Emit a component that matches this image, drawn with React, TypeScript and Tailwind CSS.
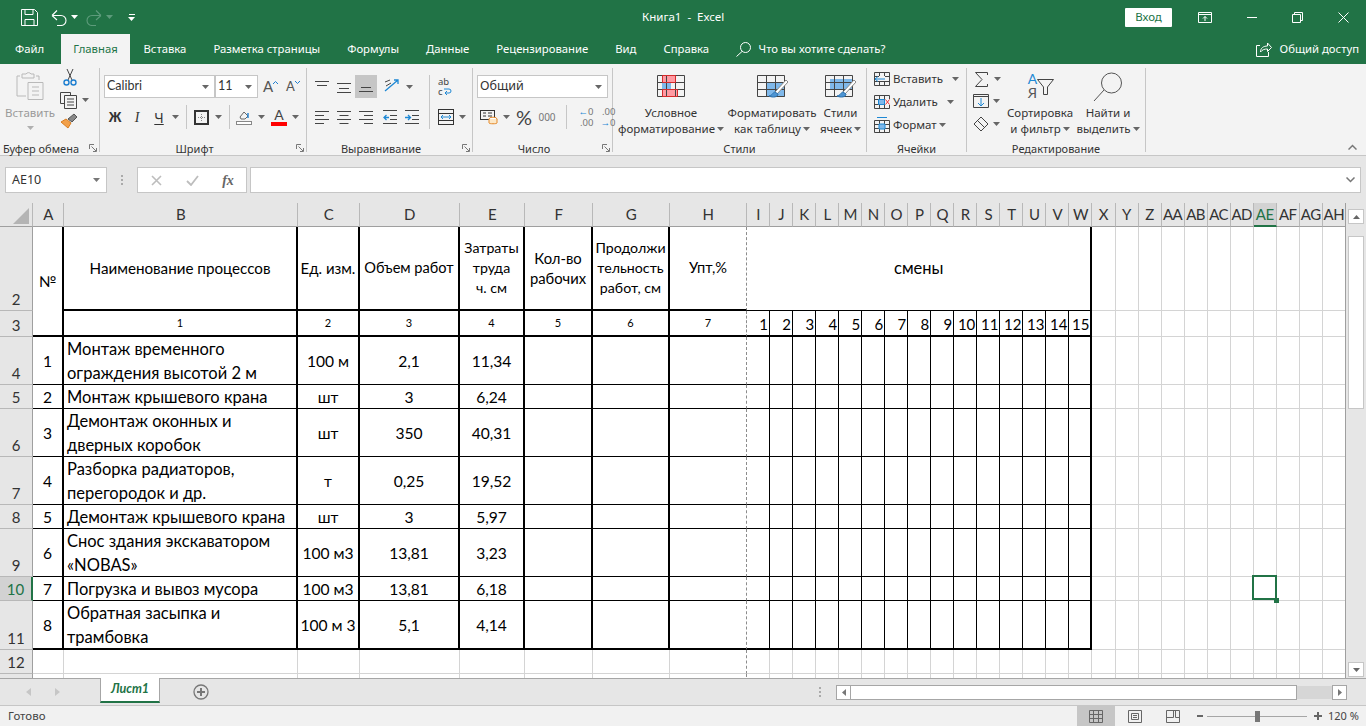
import React from 'react';

const Caret = ({ color = '#666' }: { color?: string }) => (
  <svg width="7" height="4" viewBox="0 0 7 4" className="shrink-0"><path d="M0 0h7L3.5 4z" fill={color} /></svg>
);

const Box = ({ w, active, children }: { w: number; active?: boolean; children?: React.ReactNode }) => (
  <div className={`flex items-center justify-center h-full shrink-0 ${active ? 'bg-[#c6c6c6]' : ''}`} style={{ width: w }}>
    {children}
  </div>
);

const Sep = ({ w }: { w: number }) => (
  <div className="flex justify-center h-full shrink-0" style={{ width: w }}><div className="w-px h-full bg-[#c6c6c6]" /></div>
);

const AlignLeft = () => (
  <svg width="15" height="14" stroke="#444"><path d="M0 1.5h14M0 5.5h9M0 9.5h14M0 13.5h9" /></svg>
);
const AlignCenter = () => (
  <svg width="15" height="14" stroke="#444"><path d="M0 1.5h14M2.5 5.5h9M0 9.5h14M2.5 13.5h9" /></svg>
);
const AlignRight = () => (
  <svg width="15" height="14" stroke="#444"><path d="M0 1.5h14M5 5.5h9M0 9.5h14M5 13.5h9" /></svg>
);
const Indent = ({ right }: { right?: boolean }) => (
  <svg width="15" height="14" fill="none">
    <path d="M0 .5h14M0 13.5h14M7 5.5h7M7 9.5h7" stroke="#444" />
    <path d={right ? 'M0 7.5h5M3 5l2.5 2.5L3 10' : 'M6 7.5H1M3.5 5L1 7.5 3.5 10'} stroke="#1e88d4" strokeWidth="1.3" />
  </svg>
);

const Launcher = () => (
  <svg width="8" height="8" viewBox="0 0 8 8" fill="none" stroke="#777"><path d="M.5 5V.5H5M2.5 2.5L7 7M4 7.5h3.5V4" /></svg>
);

const SelectBox = ({ w, label, font }: { w: number; label: string; font?: boolean }) => (
  <div className={`h-[23px] bg-white border border-[#c6c6c6] flex items-center justify-between pl-[2px] pr-[5px] text-[12.5px] text-[#333] shrink-0 ${font ? 'font-[Lato,Roboto,sans-serif]' : ''}`} style={{ width: w }}>
    <span>{label}</span><Caret />
  </div>
);

const Group = ({ w, label, launcher, children }: { w: number; label: string; launcher?: boolean; children: React.ReactNode }) => (
  <div className="h-[84px] mt-[4px] border-r border-r-[#c6c6c6] flex flex-col shrink-0" style={{ width: w }}>
    <div className="flex-1 min-h-0">{children}</div>
    <div className="h-[8px] flex items-center text-[11px] text-[#333] leading-none">
      <span className="flex-1 text-center whitespace-nowrap">{label}</span>
      {launcher && <span className="w-[17px] flex justify-center pl-[4px]"><Launcher /></span>}
    </div>
  </div>
);

const TitleBar = () => (
  <div className="h-[34px] bg-[#217346] flex items-center text-white text-[11.5px] shrink-0">
    <div className="w-[21px]" />
    <svg width="17" height="17" viewBox="0 0 17 17" fill="none" stroke="#fff"><path d="M.5.5h13l3 3v13H.5zM4 .5v5h8v-5M4 16.5v-6h9v6" /></svg>
    <div className="w-[13px]" />
    <svg width="16" height="17" viewBox="0 0 16 17" fill="none" stroke="#fff" strokeWidth="1.1"><path d="M1 6.5L6 1.5M1 6.5L6 11M1 6.5h9a5 5 0 0 1 0 10H6" /></svg>
    <div className="w-[4px]" /><Caret color="#fff" />
    <div className="w-[8px]" />
    <svg width="16" height="17" viewBox="0 0 16 17" fill="none" stroke="#5d9b7b" strokeWidth="1.1"><path d="M15 6.5L10 1.5M15 6.5L10 11M15 6.5H6a5 5 0 0 0 0 10h4" /></svg>
    <div className="w-[4px]" /><Caret color="#5d9b7b" />
    <div className="w-[15px]" />
    <div className="flex flex-col items-center gap-[2px]"><div className="w-[6px] h-px bg-white" /><Caret color="#fff" /></div>
    <div className="w-[507px]" />
    <span className="w-[82px] text-center whitespace-pre">Книга1  -  Excel</span>
    <div className="flex-1" />
    <div className="w-[47px] h-[19px] bg-white rounded-[1px] text-[#217346] flex items-center justify-center mr-[26px]">Вход</div>
    <svg width="14" height="11" viewBox="0 0 14 11" fill="none" stroke="#fff" className="mr-[35px]"><path d="M.5.5h13v10H.5zM.5 2.5h13M7 9V4.5M5 6.5l2-2 2 2" /></svg>
    <div className="w-[10px] h-px bg-white mr-[35px]" />
    <svg width="11" height="11" viewBox="0 0 11 11" fill="none" stroke="#fff" className="mr-[35px]"><path d="M.5 2.5h8v8h-8zM2.5 2.5v-2h8v8h-2" /></svg>
    <svg width="11" height="11" viewBox="0 0 11 11" fill="none" stroke="#fff" className="mr-[17px]"><path d="M.5.5l10 10M10.5.5l-10 10" /></svg>
  </div>
);

const TABS = ['Вставка', 'Разметка страницы', 'Формулы', 'Данные', 'Рецензирование', 'Вид', 'Справка'];

const TabBar = () => (
  <div className="h-[30px] bg-[#217346] flex text-white text-[11.3px] shrink-0">
    <div className="w-[61px] flex items-center pl-[15px]">Файл</div>
    <div className="w-[69px] bg-[#f3f3f3] text-[#217346] flex items-center justify-center">Главная</div>
    {TABS.map((t) => (
      <div key={t} className="px-[13.5px] flex items-center whitespace-nowrap">{t}</div>
    ))}
    <div className="flex items-center ml-[13px] gap-[8px]">
      <svg width="15" height="15" viewBox="0 0 15 15" fill="none" stroke="#fff"><circle cx="9.5" cy="5.5" r="5" /><path d="M6 9.5L.5 14.5" /></svg>
      <span className="whitespace-nowrap">Что вы хотите сделать?</span>
    </div>
    <div className="flex-1" />
    <div className="flex items-center gap-[8px] pr-[7px]">
      <svg width="16" height="15" viewBox="0 0 16 15" fill="none" stroke="#fff"><path d="M4 3.5H.5v11h12V10" /><path d="M4.5 10c0-4 3-6 7-6V1l4 4.5-4 4V7c-3 0-5 .5-7 3z" /></svg>
      <span className="whitespace-nowrap">Общий доступ</span>
    </div>
  </div>
);

const Clipboard = () => (
  <div className="flex h-full">
    <div className="w-[60px] flex flex-col items-center pt-[3px]">
      <svg width="28" height="29" viewBox="0 0 28 29" fill="none" stroke="#b9b9b9"><path d="M4 5H1v20h9M20 5h3v4M6 3h4a3 3 0 0 1 5 0h3v4H6z" /><path d="M12 11.5h15v17H12z" fill="#f3f3f3" /><path d="M16 16h7M16 20h7M16 24h7" /></svg>
      <span className="text-[11.5px] text-[#9a9a9a] mt-[5px] leading-[16px]">Вставить</span>
      <div className="mt-[5px]"><Caret color="#b0b0b0" /></div>
    </div>
    <div className="flex flex-col pt-[1px]">
      <div className="h-[19px] pl-[2px]">
        <svg width="16" height="17" viewBox="0 0 16 17" fill="none"><path d="M5 0l5 11M11 0L6 11" stroke="#444" /><circle cx="4.5" cy="13.5" r="2.5" stroke="#1e7fd0" strokeWidth="1.4" /><circle cx="11.5" cy="13.5" r="2.5" stroke="#1e7fd0" strokeWidth="1.4" /></svg>
      </div>
      <div className="h-[22px] flex items-center pt-[2px]">
        <svg width="17" height="17" viewBox="0 0 17 17" fill="none" stroke="#444"><path d="M.5.5h10v3M.5.5v11h4" /><path d="M4.5 3.5h12v13h-12z" fill="#f3f3f3" /><path d="M7 7h7M7 10h7M7 13h7" /></svg>
        <div className="ml-[5px]"><Caret /></div>
      </div>
      <div className="pt-[3px]">
        <svg width="18" height="16" viewBox="0 0 18 16" fill="none"><path d="M1 9l7 6 3-5-5-4z" fill="#f2a04a" stroke="#d97c1f" /><path d="M8 6l6-5 3 3-5 5z" fill="#888" stroke="#555" /></svg>
      </div>
    </div>
  </div>
);

const Font = () => (
  <div className="pl-[4px] pt-[7px]">
    <div className="flex items-center h-[23px]">
      <SelectBox w={111} label="Calibri" font />
      <SelectBox w={43} label="11" font />
      <Box w={25}>
        <span className="text-[15px] text-[#555] leading-none font-[Lato,Roboto,sans-serif]">A</span>
        <svg width="5" height="3" stroke="#1e7fd0" fill="none" className="mb-[8px]"><path d="M0 3l2.5-2.5L5 3" /></svg>
      </Box>
      <Box w={20}>
        <span className="text-[13px] text-[#555] leading-none font-[Lato,Roboto,sans-serif]">A</span>
        <svg width="5" height="3" stroke="#1e7fd0" fill="none" className="mb-[8px]"><path d="M0 0l2.5 2.5L5 0" /></svg>
      </Box>
    </div>
    <div className="flex items-center h-[24px] mt-[7px] text-[#333]">
      <Box w={22}><span className="font-bold text-[14px] font-['Liberation_Sans']">Ж</span></Box>
      <Box w={22}><span className="italic text-[14px] font-['Liberation_Serif']">I</span></Box>
      <Box w={22}><span className="underline text-[14px]">Ч</span></Box>
      <Box w={10}><Caret /></Box>
      <Sep w={12} />
      <Box w={18}>
        <svg width="15" height="15" fill="none"><rect x="1" y="1" width="13" height="13" stroke="#333" strokeWidth="2" /><path d="M7.5 4v7M4 7.5h7" stroke="#888" strokeDasharray="1 1" /></svg>
      </Box>
      <Box w={16}><Caret /></Box>
      <Sep w={6} />
      <Box w={24}>
        <svg width="16" height="16" fill="none"><path d="M4 8l4-5 4 4-3 3H5z" stroke="#666" /><path d="M12 9V4" stroke="#1e7fd0" strokeWidth="1.4" /><rect x=".5" y="12.5" width="15" height="3" fill="#fff" stroke="#888" /></svg>
      </Box>
      <Box w={10}><Caret /></Box>
      <Box w={26}>
        <div className="flex flex-col items-center">
          <span className="text-[14px] leading-[14px] text-[#444] font-[Lato,Roboto,sans-serif]">A</span>
          <div className="w-[16px] h-[4px] bg-[#ff0000]" />
        </div>
      </Box>
      <Box w={6}><Caret /></Box>
    </div>
  </div>
);

const Alignment = () => (
  <div className="pl-[4px] pt-[7px] flex h-full">
    <div className="w-[117px] shrink-0">
      <div className="flex h-[23px]">
        <Box w={22}><svg width="15" height="14" stroke="#444"><path d="M0 1.5h14M2 5.5h10" /></svg></Box>
        <Box w={22}><svg width="15" height="14" stroke="#444"><path d="M0 3.5h14M2 8.5h10M0 12.5h14" /></svg></Box>
        <Box w={22} active><svg width="15" height="14" stroke="#444"><path d="M2 7.5h10M0 11.5h14" /></svg></Box>
        <Box w={2} />
        <Box w={24}>
          <svg width="17" height="17" fill="none"><path d="M2 13L15 2M11 2h4v4" stroke="#1e88d4" strokeWidth="1.3" /><path d="M2 4l5-2M3 8l5-3" stroke="#444" /></svg>
        </Box>
        <Box w={12}><Caret /></Box>
      </div>
      <div className="flex h-[24px] mt-[7px]">
        <Box w={22}><AlignLeft /></Box>
        <Box w={22}><AlignCenter /></Box>
        <Box w={22}><AlignRight /></Box>
        <Box w={2} />
        <Box w={22}><Indent /></Box>
        <Box w={22}><Indent right /></Box>
      </div>
    </div>
    <div className="w-[3px] h-[54px] shrink-0 flex justify-center"><div className="w-px h-full bg-[#c6c6c6]" /></div>
    <div className="pl-[7px]">
      <div className="h-[23px] flex items-center">
        <div className="flex flex-col leading-[10px] text-[9.5px] text-[#444]">
          <span>ab</span>
          <span className="flex items-center">c<svg width="9" height="7" fill="none" stroke="#1e88d4"><path d="M1 1h5a2 2 0 0 1 0 4H2M4 3L2 5l2 2" /></svg></span>
        </div>
      </div>
      <div className="h-[24px] mt-[7px] flex items-center gap-[5px]">
        <svg width="16" height="16" fill="none"><rect x=".5" y=".5" width="15" height="15" stroke="#333" /><path d="M.5 4.5h15M.5 11.5h15" stroke="#333" /><path d="M3 8h10M5 6L3 8l2 2M11 6l2 2-2 2" stroke="#1e88d4" /></svg>
        <Caret />
      </div>
    </div>
  </div>
);

const NumberGroup = () => (
  <div className="pl-[4px] pt-[7px]">
    <SelectBox w={131} label="Общий" />
    <div className="flex items-center h-[24px] mt-[7px]">
      <Box w={24}>
        <svg width="18" height="15" fill="none"><rect x=".5" y=".5" width="14" height="9" stroke="#333" /><path d="M3 3h3M3 6h3M8 3h4M8 6h4" stroke="#333" /><ellipse cx="13" cy="9" rx="4" ry="1.8" fill="#fff" stroke="#e58a2b" /><path d="M9 9v4c0 1 8 1 8 0V9" fill="#fce8c8" stroke="#e58a2b" /></svg>
      </Box>
      <Box w={10}><Caret /></Box>
      <Box w={26}><span className="text-[20px] leading-none text-[#444] font-[Lato,Roboto,sans-serif]">%</span></Box>
      <Box w={20}><span className="text-[10px] text-[#777]">000</span></Box>
      <Sep w={18} />
      <Box w={22}>
        <div className="flex flex-col items-end text-[9.5px] leading-[11px] text-[#777]"><span><span className="text-[#1e88d4]">←</span>0</span><span>.00</span></div>
      </Box>
      <Box w={22}>
        <div className="flex flex-col items-end text-[9.5px] leading-[11px] text-[#777]"><span>.00</span><span><span className="text-[#1e88d4]">→</span>0</span></div>
      </Box>
    </div>
  </div>
);

const BigButton = ({ w, icon, top, bottom }: { w: number; icon: React.ReactNode; top: string; bottom: string }) => (
  <div className="flex flex-col items-center pt-[7px] shrink-0" style={{ width: w }}>
    <div className="h-[30px]">{icon}</div>
    <div className="text-[11.5px] leading-[16px] text-[#333] text-center whitespace-nowrap">
      <div>{top}</div>
      <div className="flex items-center justify-center gap-[2px]">{bottom}<Caret /></div>
    </div>
  </div>
);

const GridIcon = ({ children }: { children?: React.ReactNode }) => (
  <svg width="31" height="24" viewBox="0 0 31 24" fill="none">
    {children}
    <path d="M.5.5h27v21H.5zM.5 7.5h27M.5 14.5h27M9.5.5v21M18.5.5v21" stroke="#444" />
    <path d="M29 5L18 17l2 2L31 7z" fill="#fff" stroke="#888" />
    <path d="M18 17c-2 0-2 3-6 4 4 2 9 1 9-2z" fill="#4d94d2" stroke="#2d74b2" />
  </svg>
);

const Styles = () => (
  <div className="flex h-full">
    <BigButton w={116} top="Условное" bottom="форматирование" icon={
      <svg width="28" height="22" viewBox="0 0 28 22" fill="none">
        <path d="M5 .5h13v7H5z" fill="#ff9aa2" /><path d="M5 7.5h9v7H5z" fill="#7fb8ea" /><path d="M5 14.5h15v7H5z" fill="#ff9aa2" />
        <path d="M.5.5h27v21H.5zM.5 7.5h27M.5 14.5h27M9.5.5v21M18.5.5v21" stroke="#444" />
        <path d="M5.5.5h13v7h-13zM5.5 14.5h15v7h-15z" stroke="#d62b2b" />
      </svg>
    } />
    <BigButton w={86} top="Форматировать" bottom="как таблицу" icon={<GridIcon><path d="M9 7h19v15H9z" fill="#7fb8ea" /></GridIcon>} />
    <BigButton w={51} top="Стили" bottom="ячеек" icon={<GridIcon><path d="M5 4h22v11H5z" fill="#7fb8ea" /></GridIcon>} />
  </div>
);

const CellRow = ({ icon, label, gap }: { icon: React.ReactNode; label: string; gap: number }) => (
  <div className="h-[23px] flex items-center text-[11.5px] text-[#333]">
    <div className="w-[19px] flex items-center">{icon}</div>
    <span className="whitespace-nowrap">{label}</span>
    <div style={{ width: gap }} />
    <Caret />
  </div>
);

const Cells = () => (
  <div className="pl-[7px] -mt-px">
    <CellRow label="Вставить" gap={9} icon={<svg width="16" height="14" fill="none" stroke="#444"><path d="M.5.5h15v13H.5zM.5 4.5h15M.5 9.5h15M5.5.5v13M10.5.5v13" /><path d="M5 4h6v5H5z" fill="#f3f3f3" stroke="none" /><path d="M1 7h10M4 4.5L1 7l3 2.5" stroke="#1e88d4" /></svg>} />
    <CellRow label="Удалить" gap={9} icon={<svg width="16" height="14" fill="none" stroke="#444"><path d="M.5.5h15v13H.5zM.5 4.5h15M.5 9.5h15M5.5.5v13M10.5.5v13" /><path d="M4.5 4.5h6v5h-6z" fill="#7fb8ea" stroke="#1e88d4" /><path d="M11 4h5v6h-5z" fill="#f3f3f3" stroke="none" /><path d="M11.5 4.5l4 5M15.5 4.5l-4 5" stroke="#e33" /></svg>} />
    <CellRow label="Формат" gap={2} icon={<svg width="16" height="16" fill="none" stroke="#444"><path d="M.5 3.5h15v12H.5zM.5 7.5h15M.5 11.5h15M5.5 3.5v12M10.5 3.5v12" /><path d="M5 7h6v5H5z" fill="#7fb8ea" stroke="#1e88d4" /><path d="M3 .5h10" stroke="#1e88d4" /></svg>} />
  </div>
);

const Editing = () => (
  <div className="flex h-full">
    <div className="w-[40px] pl-[6px] shrink-0">
      <div className="h-[22px] flex items-center gap-[6px] pl-[2px]">
        <svg width="13" height="15" fill="none" stroke="#444"><path d="M12.5 3V.5h-12L7 7.5.5 14.5h12V12" /></svg>
        <Caret />
      </div>
      <div className="h-[22px] flex items-center gap-[4px]">
        <svg width="16" height="14" fill="none"><path d="M.5.5h15v13H.5zM.5 2.5h15" stroke="#444" /><path d="M8 4v8M5 9l3 3 3-3" stroke="#1e88d4" /></svg>
        <Caret />
      </div>
      <div className="h-[24px] flex items-center gap-[4px]">
        <svg width="16" height="16" fill="none" stroke="#444"><path d="M1 8l7-7 7 7-7 7zM4.5 4.5l7 7" /></svg>
        <Caret />
      </div>
    </div>
    <div className="w-[66px] flex flex-col items-center pt-[4px] shrink-0">
      <div className="h-[33px] flex items-start pl-[2px]">
        <div className="flex flex-col items-center text-[14px] leading-[14px] font-[Lato,Roboto,sans-serif]"><span className="text-[#1e88d4]">А</span><span className="text-[#555]">Я</span></div>
        <svg width="17" height="17" fill="none" stroke="#444" className="mt-[7px]"><path d="M.5.5h16L10.5 8v7.5h-4V8z" /></svg>
      </div>
      <div className="text-[11.5px] leading-[16px] text-[#333] text-center whitespace-nowrap">
        <div>Сортировка</div>
        <div className="flex items-center justify-center gap-[2px]">и фильтр<Caret /></div>
      </div>
    </div>
    <div className="w-[70px] flex flex-col items-center pt-[4px] shrink-0">
      <div className="h-[33px]">
        <svg width="30" height="30" fill="none" stroke="#555"><circle cx="18.5" cy="11" r="10" /><path d="M11 18L1 29" /></svg>
      </div>
      <div className="text-[11.5px] leading-[16px] text-[#333] text-center whitespace-nowrap">
        <div>Найти и</div>
        <div className="flex items-center justify-center gap-[2px]">выделить<Caret /></div>
      </div>
    </div>
  </div>
);

const Ribbon = () => (
  <div className="h-[92px] bg-[#f3f3f3] border-b border-b-[#c6c6c6] flex shrink-0">
    <Group w={100} label="Буфер обмена" launcher><Clipboard /></Group>
    <Group w={207} label="Шрифт" launcher><Font /></Group>
    <Group w={166} label="Выравнивание" launcher><Alignment /></Group>
    <Group w={140} label="Число" launcher><NumberGroup /></Group>
    <Group w={254} label="Стили"><Styles /></Group>
    <Group w={100} label="Ячейки"><Cells /></Group>
    <Group w={179} label="Редактирование"><Editing /></Group>
    <div className="flex-1 flex items-end justify-end pr-[9px] pb-[5px]">
      <svg width="9" height="6" fill="none" stroke="#777" strokeWidth="1.5"><path d="M.5 5.5L4.5 1.5l4 4" /></svg>
    </div>
  </div>
);

const FormulaBar = () => (
  <div className="h-[47px] bg-[#e6e6e6] flex items-start pt-[11px] pl-[5px] pr-[5px] shrink-0">
    <div className="w-[102px] h-[26px] bg-white border border-[#c6c6c6] flex items-center justify-between pl-[6px] pr-[6px] text-[12.5px] text-[#333]">
      <span>AE10</span><Caret color="#777" />
    </div>
    <div className="w-[30px] h-[26px] flex flex-col items-center justify-center gap-[2px]">
      <div className="w-[2px] h-[2px] bg-[#aaa]" /><div className="w-[2px] h-[2px] bg-[#aaa]" /><div className="w-[2px] h-[2px] bg-[#aaa]" />
    </div>
    <div className="w-[110px] h-[26px] bg-white border border-[#c6c6c6] flex items-center">
      <div className="w-[36px] flex justify-center"><svg width="11" height="11" fill="none" stroke="#bdbdbd" strokeWidth="1.6"><path d="M1 1l9 9M10 1l-9 9" /></svg></div>
      <div className="w-[36px] flex justify-center"><svg width="13" height="11" fill="none" stroke="#bdbdbd" strokeWidth="1.8"><path d="M1 6l4 4 7-9" /></svg></div>
      <div className="w-[36px] flex justify-center italic font-['Liberation_Serif'] text-[14px] font-bold text-[#666]">fx</div>
    </div>
    <div className="w-[3px]" />
    <div className="flex-1 h-[26px] bg-white border border-[#c6c6c6] flex items-center justify-end pr-[5px]">
      <svg width="9" height="6" fill="none" stroke="#777" strokeWidth="1.5"><path d="M.5.5l4 4 4-4" /></svg>
    </div>
  </div>
);

const COLS = ['A', 'B', 'C', 'D', 'E', 'F', 'G', 'H', 'I', 'J', 'K', 'L', 'M', 'N', 'O', 'P', 'Q', 'R', 'S', 'T', 'U', 'V', 'W', 'X', 'Y', 'Z', 'AA', 'AB', 'AC', 'AD', 'AE', 'AF', 'AG', 'AH'];

const HEAD: React.ReactNode[] = [
  'Наименование процессов', 'Ед. изм.', 'Объем работ',
  <>Затраты<br />труда<br />ч. см</>, <>Кол-во<br />рабочих</>, <>Продолжи<br />тельность<br />работ, см</>, 'Упт,%',
];

const HEAD_SIZE = ['text-[15.2px]', 'text-[15px]', 'text-[14.6px]', 'text-[14.2px]', 'text-[14.8px]', 'text-[14.2px]', 'text-[14.6px]'];

const DATA: Record<number, React.ReactNode[]> = {
  4: ['1', <>Монтаж временного<br />ограждения высотой 2 м</>, '100 м', '2,1', '11,34'],
  5: ['2', 'Монтаж крышевого крана', 'шт', '3', '6,24'],
  6: ['3', <>Демонтаж оконных и<br />дверных коробок</>, 'шт', '350', '40,31'],
  7: ['4', <>Разборка радиаторов,<br />перегородок и др.</>, 'т', '0,25', '19,52'],
  8: ['5', 'Демонтаж крышевого крана', 'шт', '3', '5,97'],
  9: ['6', <>Снос здания экскаватором<br />«NOBAS»</>, '100 м3', '13,81', '3,23'],
  10: ['7', 'Погрузка и вывоз мусора', '100 м3', '13,81', '6,18'],
  11: ['8', <>Обратная засыпка и<br />трамбовка</>, '100 м 3', '5,1', '4,14'],
};

const rightBorder = (r: number, c: number) => {
  if (c === 7) return 'border-r border-r-[#8c8c8c] [border-right-style:dashed]';
  if (r <= 11 && c <= 6) return 'border-r-2 border-r-black';
  if (r <= 11 && c === 22) return 'border-r-2 border-r-black';
  if (r <= 11 && c >= 8 && c < 22) return 'border-r border-r-black';
  return 'border-r border-r-[#d4d4d4]';
};

const bottomBorder = (r: number, c: number) => {
  if (c <= 22 && (r === 3 || r === 11)) return 'border-b-2 border-b-black';
  if (c <= 22 && r >= 4 && r <= 10) return 'border-b border-b-black';
  return 'border-b border-b-[#d4d4d4]';
};

const CELL_BASE = 'flex items-center justify-center text-center min-w-0 overflow-hidden whitespace-nowrap';

const RowHeader = ({ n }: { n: number }) => (
  <div className={`flex items-end justify-center text-[15px] leading-[22px] border-b border-b-[#b8b8b8] ${n === 10 ? 'bg-[#d2d2d2] text-[#217346] border-r-2 border-r-[#217346]' : 'bg-[#e6e6e6] text-[#333] border-r border-r-[#9f9f9f]'}`}>{n < 13 ? n : ''}</div>
);

const Sheet = () => {
  const cells: React.ReactNode[] = [];
  for (let r = 2; r <= 13; r++) {
    cells.push(<RowHeader key={`h${r}`} n={r} />);
    for (let c = 0; c < COLS.length; c++) {
      const key = `${r}-${c}`;
      const edge = `${rightBorder(r, c)} ${bottomBorder(r, c)}`;
      if (r === 2 && c === 0) {
        cells.push(<div key={key} className={`${CELL_BASE} row-span-2 text-[15px] ${rightBorder(3, 0)} ${bottomBorder(3, 0)}`}>№</div>);
      } else if (r === 3 && c === 0) {
        continue;
      } else if (r === 2 && c >= 1 && c <= 7) {
        const side = c === 7 ? rightBorder(2, 7) : 'border-r-2 border-r-black';
        cells.push(<div key={key} className={`${CELL_BASE} ${HEAD_SIZE[c - 1]} leading-[20px] border-b-2 border-b-black ${side}`}>{HEAD[c - 1]}</div>);
      } else if (r === 2 && c === 8) {
        cells.push(<div key={key} className={`${CELL_BASE} col-span-15 text-[16.5px] border-r-2 border-r-black border-b border-b-black`}>смены</div>);
      } else if (r === 2 && c > 8 && c <= 22) {
        continue;
      } else if (r === 3 && c >= 1 && c <= 7) {
        cells.push(<div key={key} className={`${CELL_BASE} text-[11px] ${edge}`}>{c}</div>);
      } else if (r === 3 && c >= 8 && c <= 22) {
        cells.push(<div key={key} className={`flex items-end justify-end pr-[1px] pb-[1px] text-[15px] leading-[20px] ${edge}`}>{c - 7}</div>);
      } else if (DATA[r] && c === 1) {
        cells.push(<div key={key} className={`flex items-center text-left pl-[3px] min-w-0 overflow-hidden whitespace-nowrap text-[16.5px] leading-[24px] ${edge}`}>{DATA[r][c]}</div>);
      } else if (DATA[r] && c <= 4) {
        cells.push(<div key={key} className={`${CELL_BASE} text-[15.6px] leading-[24px] ${edge}`}>{DATA[r][c]}</div>);
      } else if (r === 10 && c === 30) {
        cells.push(
          <div key={key} className={`relative ${edge}`}>
            <div className="absolute -left-[2px] -top-[2px] w-[25px] h-[25px] border-2 border-[#217346] z-10" />
            <div className="absolute -right-[3px] -bottom-[3px] w-[5px] h-[5px] bg-[#217346] z-20" />
          </div>
        );
      } else {
        cells.push(<div key={key} className={edge} />);
      }
    }
  }
  return (
    <div className="h-[475px] flex shrink-0 bg-white overflow-hidden">
      <div className="w-[1345px] shrink-0 overflow-hidden font-[Lato,Roboto,sans-serif] text-black">
        <div className="grid grid-cols-[33px_31px_234px_62px_100px_65px_68px_77px_77px_repeat(26,23.04px)] grid-rows-[24px_84px_26px_48px_24px_48px_48px_24px_48px_24px_49px_24px_24px]">
          <div className="bg-[#e6e6e6] border-r border-r-[#b8b8b8] border-b border-b-[#9f9f9f] flex items-end justify-end p-[2px] pr-[3px]">
            <svg width="16" height="16"><path d="M16 0v16H0z" fill="#b4b4b4" /></svg>
          </div>
          {COLS.map((name) => (
            <div key={name} className={`flex items-center justify-center text-[15px] tracking-[-0.5px] overflow-hidden whitespace-nowrap border-r border-r-[#b8b8b8] ${name === 'AE' ? 'bg-[#d2d2d2] text-[#217346] border-b-2 border-b-[#217346]' : 'bg-[#e6e6e6] text-[#333] border-b border-b-[#9f9f9f]'}`}>{name}</div>
          ))}
          {cells}
        </div>
      </div>
      <div className="flex-1 bg-[#e6e6e6] border-l border-l-[#9f9f9f] flex flex-col items-center pt-[6px] pb-[1px]">
        <div className="w-[16px] h-[15px] bg-white border border-[#c6c6c6] flex items-center justify-center">
          <svg width="7" height="4"><path d="M0 4h7L3.5 0z" fill="#666" /></svg>
        </div>
        <div className="w-full flex-1 px-[2px] pt-[12px]">
          <div className="w-[16px] h-[173px] bg-white border border-[#c6c6c6]" />
        </div>
        <div className="w-[16px] h-[15px] bg-white border border-[#c6c6c6] flex items-center justify-center">
          <Caret />
        </div>
      </div>
    </div>
  );
};

const SheetTabs = () => (
  <div className="h-[28px] bg-[#e6e6e6] border-t border-t-[#a6a6a6] border-b border-b-[#c6c6c6] flex shrink-0">
    <div className="w-[100px] flex items-center pl-[26px] gap-[24px] shrink-0">
      <svg width="5" height="8"><path d="M5 0v8L0 4z" fill="#c6c6c6" /></svg>
      <svg width="5" height="8"><path d="M0 0v8l5-4z" fill="#c6c6c6" /></svg>
    </div>
    <div className="w-[60px] h-[25px] bg-white border-x border-x-[#a6a6a6] border-b-2 border-b-[#217346] flex items-center justify-center italic font-bold text-[12.5px] text-[#217346] shrink-0 font-[Lato,Roboto,sans-serif] -mt-px">Лист1</div>
    <div className="w-[82px] flex items-center justify-center shrink-0">
      <svg width="16" height="16" fill="none" stroke="#777"><circle cx="8" cy="8" r="7" strokeWidth="1.3" /><path d="M4 8h8M8 4v8" strokeWidth="2" /></svg>
    </div>
    <div className="w-[575px] shrink-0" />
    <div className="w-[6px] flex flex-col items-center justify-center gap-[2px] shrink-0">
      <div className="w-[2px] h-[2px] bg-[#aaa]" /><div className="w-[2px] h-[2px] bg-[#aaa]" /><div className="w-[2px] h-[2px] bg-[#aaa]" />
    </div>
    <div className="w-[13px] shrink-0" />
    <div className="flex items-center">
      <div className="w-[15px] h-[15px] bg-white border border-[#a6a6a6] flex items-center justify-center"><svg width="4" height="7"><path d="M4 0v7L0 3.5z" fill="#777" /></svg></div>
      <div className="w-[446px] h-[15px] bg-white border-y border-r border-[#a6a6a6]" />
      <div className="w-[35px] h-[13px] bg-[#d6d6d6]" />
      <div className="w-[15px] h-[15px] bg-white border border-[#a6a6a6] flex items-center justify-center"><svg width="4" height="7"><path d="M0 0v7l4-3.5z" fill="#777" /></svg></div>
    </div>
  </div>
);

const StatusBar = () => (
  <div className="h-[20px] bg-[#f1f1f1] flex items-center text-[11.5px] text-[#444] shrink-0">
    <span className="pl-[8px] w-[1077px] shrink-0">Готово</span>
    <div className="w-[38px] h-full bg-[#c6c6c6] flex items-center justify-center shrink-0">
      <svg width="14" height="13" fill="none" stroke="#666"><path d="M.5.5h13v12H.5zM.5 4.5h13M.5 8.5h13M4.5.5v12M9.5.5v12" /></svg>
    </div>
    <div className="w-[13px]" />
    <svg width="14" height="13" fill="none" stroke="#666"><path d="M.5.5h13v12H.5z" /><path d="M3.5 3.5h7v6h-7zM5 5.5h4M5 7.5h4" /></svg>
    <div className="w-[24px]" />
    <svg width="14" height="13" fill="none" stroke="#666"><path d="M.5.5h13v12H.5zM.5 7.5h7v-7M9.5.5v7h4" /></svg>
    <div className="w-[17px]" />
    <div className="w-[6px] h-[2px] bg-[#666]" />
    <div className="w-[4px]" />
    <div className="w-[100px] h-px bg-[#a6a6a6] flex items-center justify-center shrink-0"><div className="w-[5px] h-[11px] bg-[#777]" /></div>
    <div className="w-[7px]" />
    <svg width="8" height="8" stroke="#666" strokeWidth="2"><path d="M0 4h8M4 0v8" /></svg>
    <span className="pl-[6px] text-[11px] whitespace-nowrap">120 %</span>
  </div>
);

export default function App() {
  return (
    <div className="w-[1366px] h-[726px] flex flex-col overflow-hidden font-['Noto_Sans',sans-serif]">
      <TitleBar />
      <TabBar />
      <Ribbon />
      <FormulaBar />
      <Sheet />
      <SheetTabs />
      <StatusBar />
    </div>
  );
}
